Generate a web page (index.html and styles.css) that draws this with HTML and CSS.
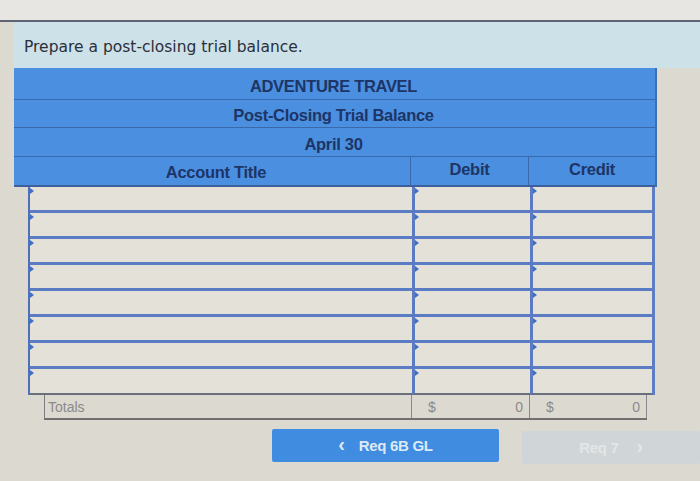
FILE: index.html
```html
<!DOCTYPE html>
<html>
<head>
<meta charset="utf-8">
<link rel="stylesheet" href="styles.css">
</head>
<body>
<div class="page">
  <div class="topbar"></div>
  <div class="prompt">Prepare a post-closing trial balance.</div>
  <div class="head">
    <div class="title-row r1">ADVENTURE TRAVEL</div>
    <div class="title-row r2">Post-Closing Trial Balance</div>
    <div class="title-row r3">April 30</div>
    <div class="col-row">
      <div class="col acct">Account Title</div>
      <div class="col">Debit</div>
      <div class="col">Credit</div>
    </div>
  </div>
  <div class="body">
    <div class="cell"></div><div class="cell"></div><div class="cell"></div>
    <div class="cell"></div><div class="cell"></div><div class="cell"></div>
    <div class="cell"></div><div class="cell"></div><div class="cell"></div>
    <div class="cell"></div><div class="cell"></div><div class="cell"></div>
    <div class="cell"></div><div class="cell"></div><div class="cell"></div>
    <div class="cell"></div><div class="cell"></div><div class="cell"></div>
    <div class="cell"></div><div class="cell"></div><div class="cell"></div>
    <div class="cell"></div><div class="cell"></div><div class="cell"></div>
  </div>
  <div class="totals">
    <div class="tcell label">Totals</div>
    <div class="tcell num"><span>$</span><span>0</span></div>
    <div class="tcell num"><span>$</span><span>0</span></div>
  </div>
  <div class="nav">
    <div class="btn prev"><span class="chev">&lsaquo;</span>Req 6B GL</div>
    <div class="btn next">Req 7<span class="chev2">&rsaquo;</span></div>
  </div>
</div>
</body>
</html>
```
FILE: styles.css
```css
html, body {
  margin: 0;
  padding: 0;
}
body {
  background: #dcd9d0;
  font-family: "Liberation Sans", Arial, sans-serif;
  width: 700px;
  height: 481px;
  overflow: hidden;
}
.page {
  display: flex;
  flex-direction: column;
}
.topbar {
  height: 20px;
  background: #e7e6e2;
  border-bottom: 2px solid #5d6470;
}
.prompt {
  margin-left: 14px;
  height: 46px;
  background: #cde1e8;
  display: flex;
  align-items: center;
  padding-left: 10px;
  padding-top: 3px;
  box-sizing: border-box;
  font-family: "DejaVu Sans", Verdana, sans-serif;
  font-size: 15.5px;
  color: #2a2f3a;
}
.head {
  margin-left: 14px;
  width: 643px;
  background: #4b8fe0;
  color: #1d3566;
  font-weight: bold;
  font-size: 16.5px;
  letter-spacing: -0.3px;
  border-right: 2px solid #3d6fb8;
  box-sizing: border-box;
}
.title-row {
  display: flex;
  align-items: center;
  justify-content: center;
  border-bottom: 1px solid #3b68a8;
  box-sizing: border-box;
  padding-right: 2px;
}
.r1 { height: 32px; padding-top: 6px; }
.r2 { height: 28px; padding-top: 4px; }
.r3 { height: 29px; padding-top: 5px; }
.col-row {
  display: grid;
  grid-template-columns: 396px 118px 127px;
  height: 28px;
  border-bottom: 2px solid #3d5f9c;
}
.col {
  display: flex;
  align-items: center;
  justify-content: center;
  border-left: 1px solid #3b68a8;
  padding-bottom: 3px;
}
.col.acct {
  border-left: none;
  padding-left: 8px;
  padding-bottom: 0;
  padding-top: 3px;
}
.body {
  margin-left: 28px;
  display: grid;
  grid-template-columns: 382px 118px 122px;
  grid-auto-rows: 26px;
  border-left: 2px solid #4c71b8;
  border-right: 3px solid #5d7ec4;
  width: fit-content;
}
.cell {
  background: #e4e1d8;
  border-bottom: 3px solid #5b7cc4;
  position: relative;
}
.cell:nth-child(3n+2),
.cell:nth-child(3n) {
  border-left: 3px solid #5b7cc4;
}
.cell::before {
  content: "";
  position: absolute;
  left: 0;
  top: 1px;
  border-top: 3px solid transparent;
  border-bottom: 3px solid transparent;
  border-left: 4px solid #3f6fc4;
}
.cell:nth-child(n+22) {
  border-bottom: 2px solid #6a6f7c;
}
.totals {
  margin-left: 44px;
  display: grid;
  grid-template-columns: 366px 118px 118px;
  height: 23px;
  border-left: 1px solid #7c7c7c;
  border-bottom: 2px solid #707070;
  width: fit-content;
  color: #8a8a8a;
  font-size: 14px;
}
.tcell {
  display: flex;
  align-items: center;
}
.label {
  padding-left: 3px;
}
.num {
  justify-content: space-between;
  padding: 0 6px 0 16px;
  border-left: 1px solid #8a8a8a;
}
.totals .num:last-child {
  border-right: 1px solid #8a8a8a;
}
.nav {
  margin-top: 9px;
  display: flex;
  gap: 23px;
  padding-left: 272px;
}
.btn {
  flex-shrink: 0;
  height: 33px;
  display: flex;
  align-items: center;
  justify-content: center;
  font-weight: bold;
  font-size: 15px;
  letter-spacing: -0.3px;
  border-radius: 2px;
}
.prev {
  width: 227px;
  background: #3f8ce0;
  color: #dde9f6;
}
.chev {
  font-size: 20px;
  margin-right: 14px;
  margin-top: -3px;
}
.next {
  width: 178px;
  margin-top: 2px;
  background: #d0d6d7;
  color: #e3e6e6;
}
.chev2 {
  font-size: 20px;
  margin-left: 18px;
  margin-top: -3px;
}
```
